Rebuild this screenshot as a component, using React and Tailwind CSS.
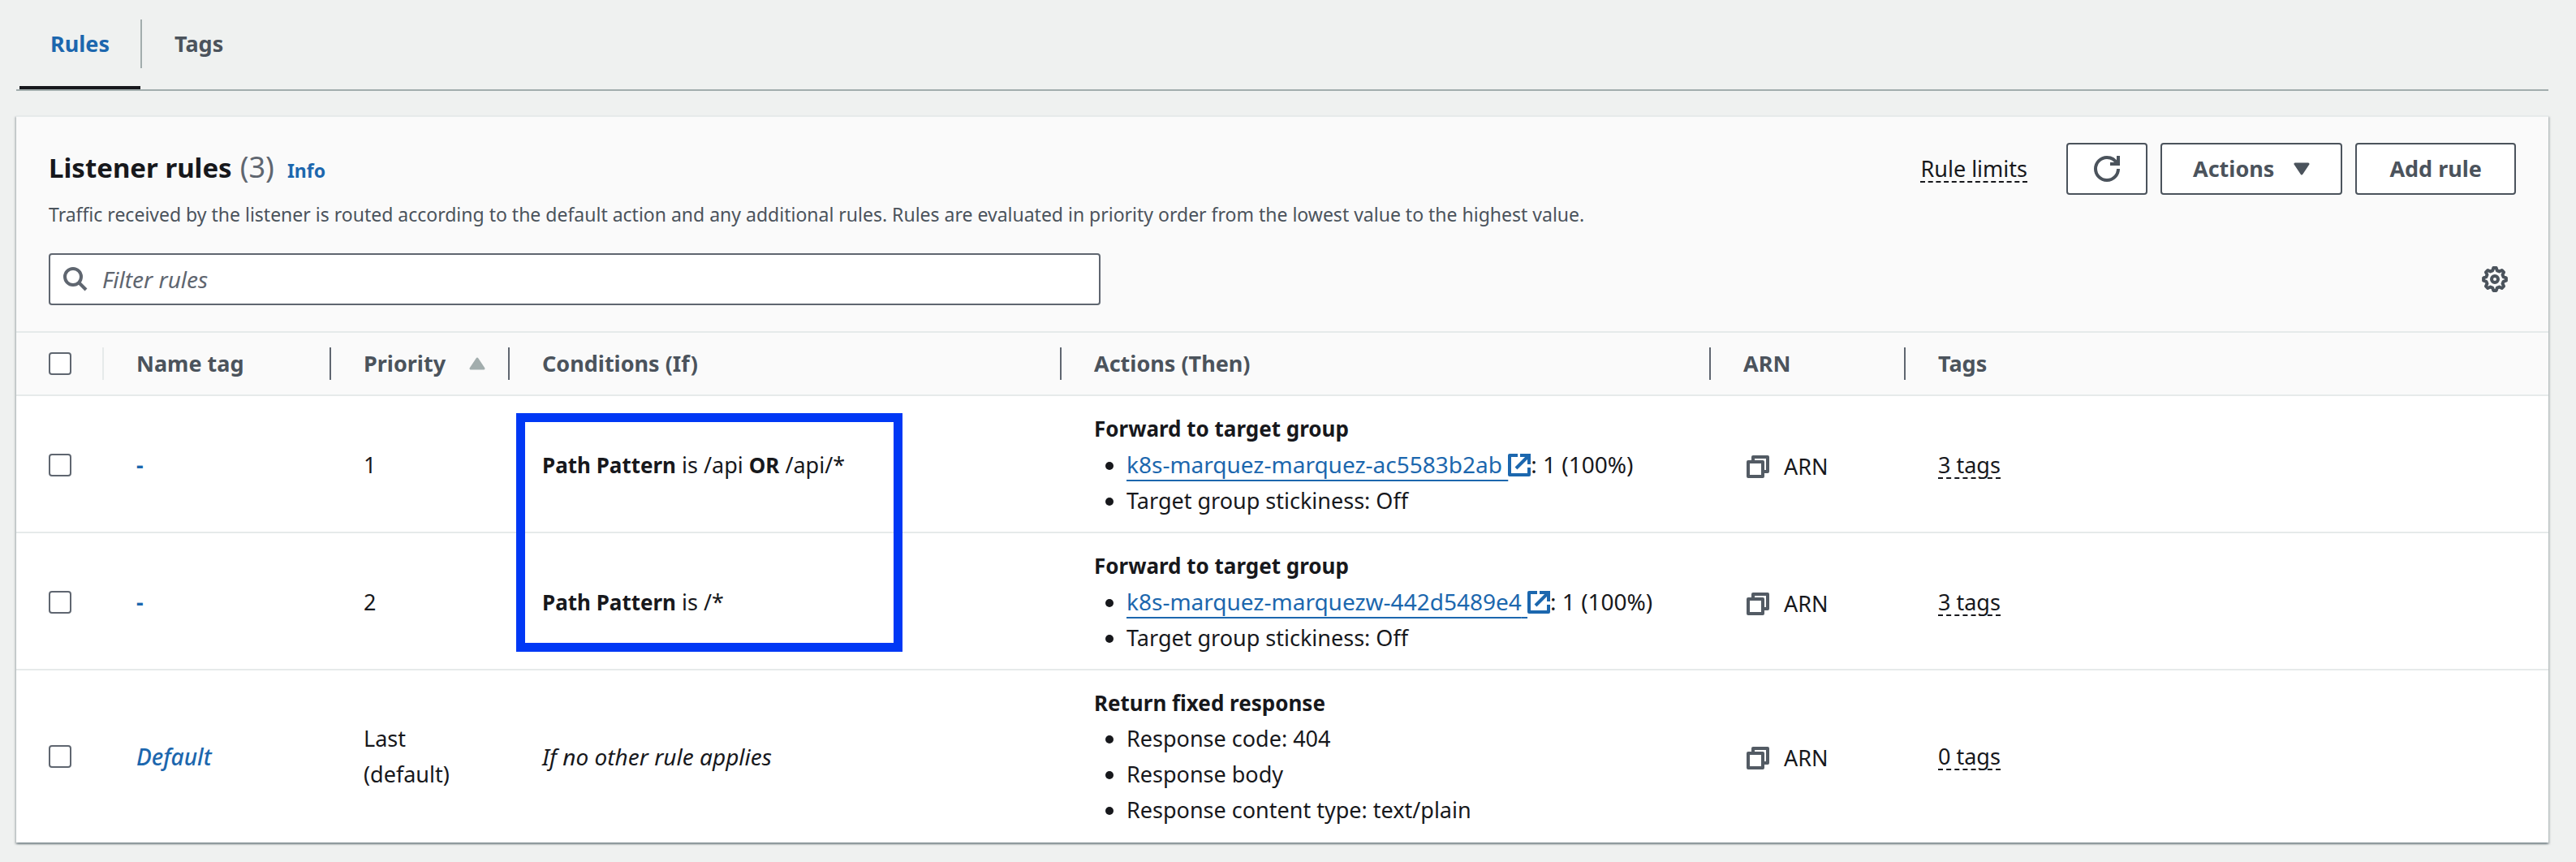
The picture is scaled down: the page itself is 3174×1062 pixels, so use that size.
import React from "react";

const cx = (...parts) => parts.filter(Boolean).join(" ");

const gearPath = (() => {
  const points = [];
  for (let i = 0; i < 8; i += 1) {
    const mid = i * 45 - 90;
    [
      [mid - 15, 11],
      [mid - 7, 14],
      [mid + 7, 14],
      [mid + 15, 11],
    ].forEach(([deg, r]) => {
      const a = (deg * Math.PI) / 180;
      points.push(`${(16 + r * Math.cos(a)).toFixed(2)} ${(16 + r * Math.sin(a)).toFixed(2)}`);
    });
  }
  return `M${points.join("L")}Z`;
})();

function GearIcon() {
  return (
    <svg viewBox="0 0 32 32" className="size-8" fill="none" stroke="currentColor" strokeWidth="4" aria-hidden="true">
      <path d={gearPath} strokeLinejoin="round" />
      <circle cx="16" cy="16" r="4" />
    </svg>
  );
}

function RefreshIcon() {
  return (
    <svg viewBox="0 0 16 16" className="size-8" fill="none" stroke="currentColor" strokeWidth="2" aria-hidden="true">
      <path d="M15 8c0 3.87-3.13 7-7 7s-7-3.13-7-7 3.13-7 7-7c2.79 0 5.2 1.63 6.33 4" />
      <path d="M10 5h5V0" />
    </svg>
  );
}

function CaretIcon({ up, className }) {
  return (
    <svg
      viewBox="0 0 20 16"
      className={cx("h-4 w-5 shrink-0", className)}
      fill="currentColor"
      stroke="currentColor"
      strokeWidth="3"
      strokeLinejoin="round"
      aria-hidden="true"
    >
      <path d={up ? "M2 14h16L10 2z" : "M2 2h16l-8 12z"} />
    </svg>
  );
}

function SearchIcon() {
  return (
    <svg viewBox="0 0 30 30" className="size-[30px] shrink-0" fill="none" stroke="currentColor" strokeWidth="4" aria-hidden="true">
      <circle cx="12" cy="12" r="10" />
      <path d="M19 19l9 9" />
    </svg>
  );
}

function ExternalIcon() {
  return (
    <svg
      viewBox="0 0 28 28"
      className="inline size-7 align-[-4px]"
      fill="none"
      stroke="currentColor"
      strokeWidth="4"
      role="img"
      aria-label="Opens in a new tab"
    >
      <path d="M12 2H2v24h24v-9" strokeLinejoin="round" />
      <path d="M15 2h11v11" />
      <path d="M25 3L10 18" />
    </svg>
  );
}

function CopyIcon() {
  return (
    <svg viewBox="0 0 28 28" className="size-7 shrink-0 text-[#535b64]" stroke="currentColor" strokeWidth="4" strokeLinejoin="round" aria-hidden="true">
      <rect x="8" y="2" width="18" height="18" fill="none" />
      <rect x="2" y="8" width="18" height="18" fill="white" />
    </svg>
  );
}

function Checkbox({ label }) {
  return (
    <input
      type="checkbox"
      aria-label={label}
      className="block size-7 appearance-none rounded-[4px] border-2 border-[#5f6670] bg-white checked:bg-[#1c67ae]"
    />
  );
}

function DashedButton({ children }) {
  return (
    <button type="button" className="border-b-2 border-dashed border-[#17181c] leading-[31px] text-[#17181c]">
      {children}
    </button>
  );
}

const outlineButton =
  "flex h-16 items-center rounded-[4px] border-2 border-[#4b535c] bg-white font-bold text-[#4b535c]";

function TargetGroup({ name }) {
  return (
    <span className="text-[28px]">
      <a
        href="#target-group"
        className="text-[#1c67ae] underline decoration-2 underline-offset-8 [text-decoration-skip-ink:none]"
      >
        {name}&nbsp;
      </a>
      <a href="#target-group" className="text-[#1c67ae]">
        <ExternalIcon />
      </a>
      : 1 (100%)
    </span>
  );
}

const bold = "text-[26px] font-bold";

const rules = [
  {
    id: "Rule 1",
    name: "-",
    nameStyle: "font-bold",
    priority: "1",
    condition: (
      <>
        <b className={bold}>Path Pattern</b> is /api <b className={bold}>OR</b> /api/*
      </>
    ),
    highlighted: true,
    action: "Forward to target group",
    details: [<TargetGroup name="k8s-marquez-marquez-ac5583b2ab" />, "Target group stickiness: Off"],
    tags: "3 tags",
  },
  {
    id: "Rule 2",
    name: "-",
    nameStyle: "font-bold",
    priority: "2",
    condition: (
      <>
        <b className={bold}>Path Pattern</b> is /*
      </>
    ),
    action: "Forward to target group",
    details: [<TargetGroup name="k8s-marquez-marquezw-442d5489e4" />, "Target group stickiness: Off"],
    tags: "3 tags",
  },
  {
    id: "Default rule",
    name: "Default",
    nameStyle: "text-[28px] italic font-medium",
    priority: "Last (default)",
    condition: <i className="text-[28px]">If no other rule applies</i>,
    action: "Return fixed response",
    details: ["Response code: 404", "Response body", "Response content type: text/plain"],
    tags: "0 tags",
  },
];

function HeadCell({ children, last, faint }) {
  return (
    <th scope="col" className="border-y-2 border-[#e6eaea] p-0 text-left font-bold">
      <div
        className={cx(
          "my-[18px] flex h-10 items-center pl-10",
          !last && "border-r-2",
          faint ? "border-[#e6eaea]" : "border-[#5f6670]"
        )}
      >
        {children}
      </div>
    </th>
  );
}

function Tabs() {
  return (
    <div role="tablist" className="flex border-b-2 border-[#a2adad] pl-1 font-bold">
      <button type="button" role="tab" aria-selected="true" className="border-b-4 border-[#17181c] px-[38px] pt-8 pb-[30px] text-[#1c67ae]">
        Rules
      </button>
      <div className="mt-6 h-15 w-0.5 bg-[#a2adad]" />
      <button type="button" role="tab" aria-selected="false" className="border-b-4 border-transparent px-10 pt-8 pb-[30px] text-[#4b535c]">
        Tags
      </button>
    </div>
  );
}

function PanelHeader() {
  return (
    <header className="bg-[#fafafa] px-10 pt-8 pb-8">
      <div className="flex items-center justify-between">
        <h2 className="flex items-baseline text-[33px]">
          <span className="font-bold text-[#17181c]">Listener rules</span>
          <span className="ml-2.5 text-[36px] text-[#5f6670]">(3)</span>
          <a href="#info" className="ml-4 text-[23px] font-bold text-[#1c67ae]">
            Info
          </a>
        </h2>
        <div className="flex items-center gap-4">
          <div className="mr-8 flex">
            <DashedButton>Rule limits</DashedButton>
          </div>
          <button type="button" aria-label="Refresh" className={cx(outlineButton, "px-8")}>
            <RefreshIcon />
          </button>
          <button type="button" aria-haspopup="menu" className={cx(outlineButton, "gap-6 px-[38px]")}>
            Actions
            <CaretIcon />
          </button>
          <button type="button" className={cx(outlineButton, "px-10")}>
            Add rule
          </button>
        </div>
      </div>
      <p className="mt-1.5 text-[23px] leading-9 text-[#4b535c]">
        Traffic received by the listener is routed according to the default action and any additional rules. Rules are
        evaluated in priority order from the lowest value to the highest value.
      </p>
      <div className="mt-[30px] flex items-center justify-between">
        <label className="flex h-16 w-full max-w-[1296px] items-center gap-[18px] rounded-[4px] border-2 border-[#5f6670] bg-white pl-4 text-[#5f6670]">
          <SearchIcon />
          <input
            type="search"
            aria-label="Filter rules"
            placeholder="Filter rules"
            className="h-full min-w-0 flex-1 bg-transparent text-[28px] outline-none placeholder:text-[#5f6670] placeholder:italic placeholder:opacity-100"
          />
        </label>
        <button type="button" aria-label="Preferences" className="mr-2.5 text-[#4b535c]">
          <GearIcon />
        </button>
      </div>
    </header>
  );
}

function RulesTable() {
  return (
    <table className="w-full table-fixed border-separate border-spacing-0">
      <colgroup>
        <col className="w-[108px]" />
        <col className="w-[280px]" />
        <col className="w-[220px]" />
        <col className="w-[680px]" />
        <col className="w-[800px]" />
        <col className="w-[240px]" />
        <col />
      </colgroup>
      <thead className="bg-[#fafafa] text-[#4b535c]">
        <tr>
          <HeadCell faint>
            <Checkbox label="Select all rules" />
          </HeadCell>
          <HeadCell>Name tag</HeadCell>
          <HeadCell>
            Priority
            <CaretIcon up className="mr-7 ml-auto text-[#a2adad]" />
          </HeadCell>
          <HeadCell>Conditions (If)</HeadCell>
          <HeadCell>Actions (Then)</HeadCell>
          <HeadCell>ARN</HeadCell>
          <HeadCell last>Tags</HeadCell>
        </tr>
      </thead>
      <tbody className="[&>tr:last-child>td]:border-b-0 [&>tr:last-child>td]:pb-[18px] [&_td]:border-b-2 [&_td]:border-[#e6eaea] [&_td]:pt-[18px] [&_td]:pb-4 [&_td]:pl-10">
        {rules.map((rule) => (
          <tr key={rule.id}>
            <td>
              <Checkbox label={`Select ${rule.id}`} />
            </td>
            <td>
              <a href="#rule" className={cx("text-[#1c67ae]", rule.nameStyle)}>
                {rule.name}
              </a>
            </td>
            <td className="pr-10">{rule.priority}</td>
            <td className="relative">
              {rule.condition}
              {rule.highlighted && (
                <div className="pointer-events-none absolute top-[21px] left-2 z-10 h-[294px] w-[476px] border-[11px] border-[#0038f5]" />
              )}
            </td>
            <td>
              <b className={cx("block", bold)}>{rule.action}</b>
              <ul className="list-disc pl-10">
                {rule.details.map((detail, i) => (
                  <li key={i}>{detail}</li>
                ))}
              </ul>
            </td>
            <td>
              <button type="button" className="flex items-center gap-[18px] pt-1 pl-1">
                <CopyIcon />
                ARN
              </button>
            </td>
            <td>
              <DashedButton>{rule.tags}</DashedButton>
            </td>
          </tr>
        ))}
      </tbody>
    </table>
  );
}

export default function App() {
  return (
    <div className="min-h-screen bg-[#eff1f0] pr-[34px] pb-[26px] pl-5 font-['Noto_Sans',sans-serif] text-[27px] leading-[44px] text-[#17181c]">
      <Tabs />
      <section className="mt-[30px] border-t-2 border-[#e6eaea] bg-white shadow-[0_2px_2px_0_rgba(0,28,36,0.3),2px_2px_2px_0_rgba(0,28,36,0.15),-2px_2px_2px_0_rgba(0,28,36,0.15)]">
        <PanelHeader />
        <RulesTable />
      </section>
    </div>
  );
}
